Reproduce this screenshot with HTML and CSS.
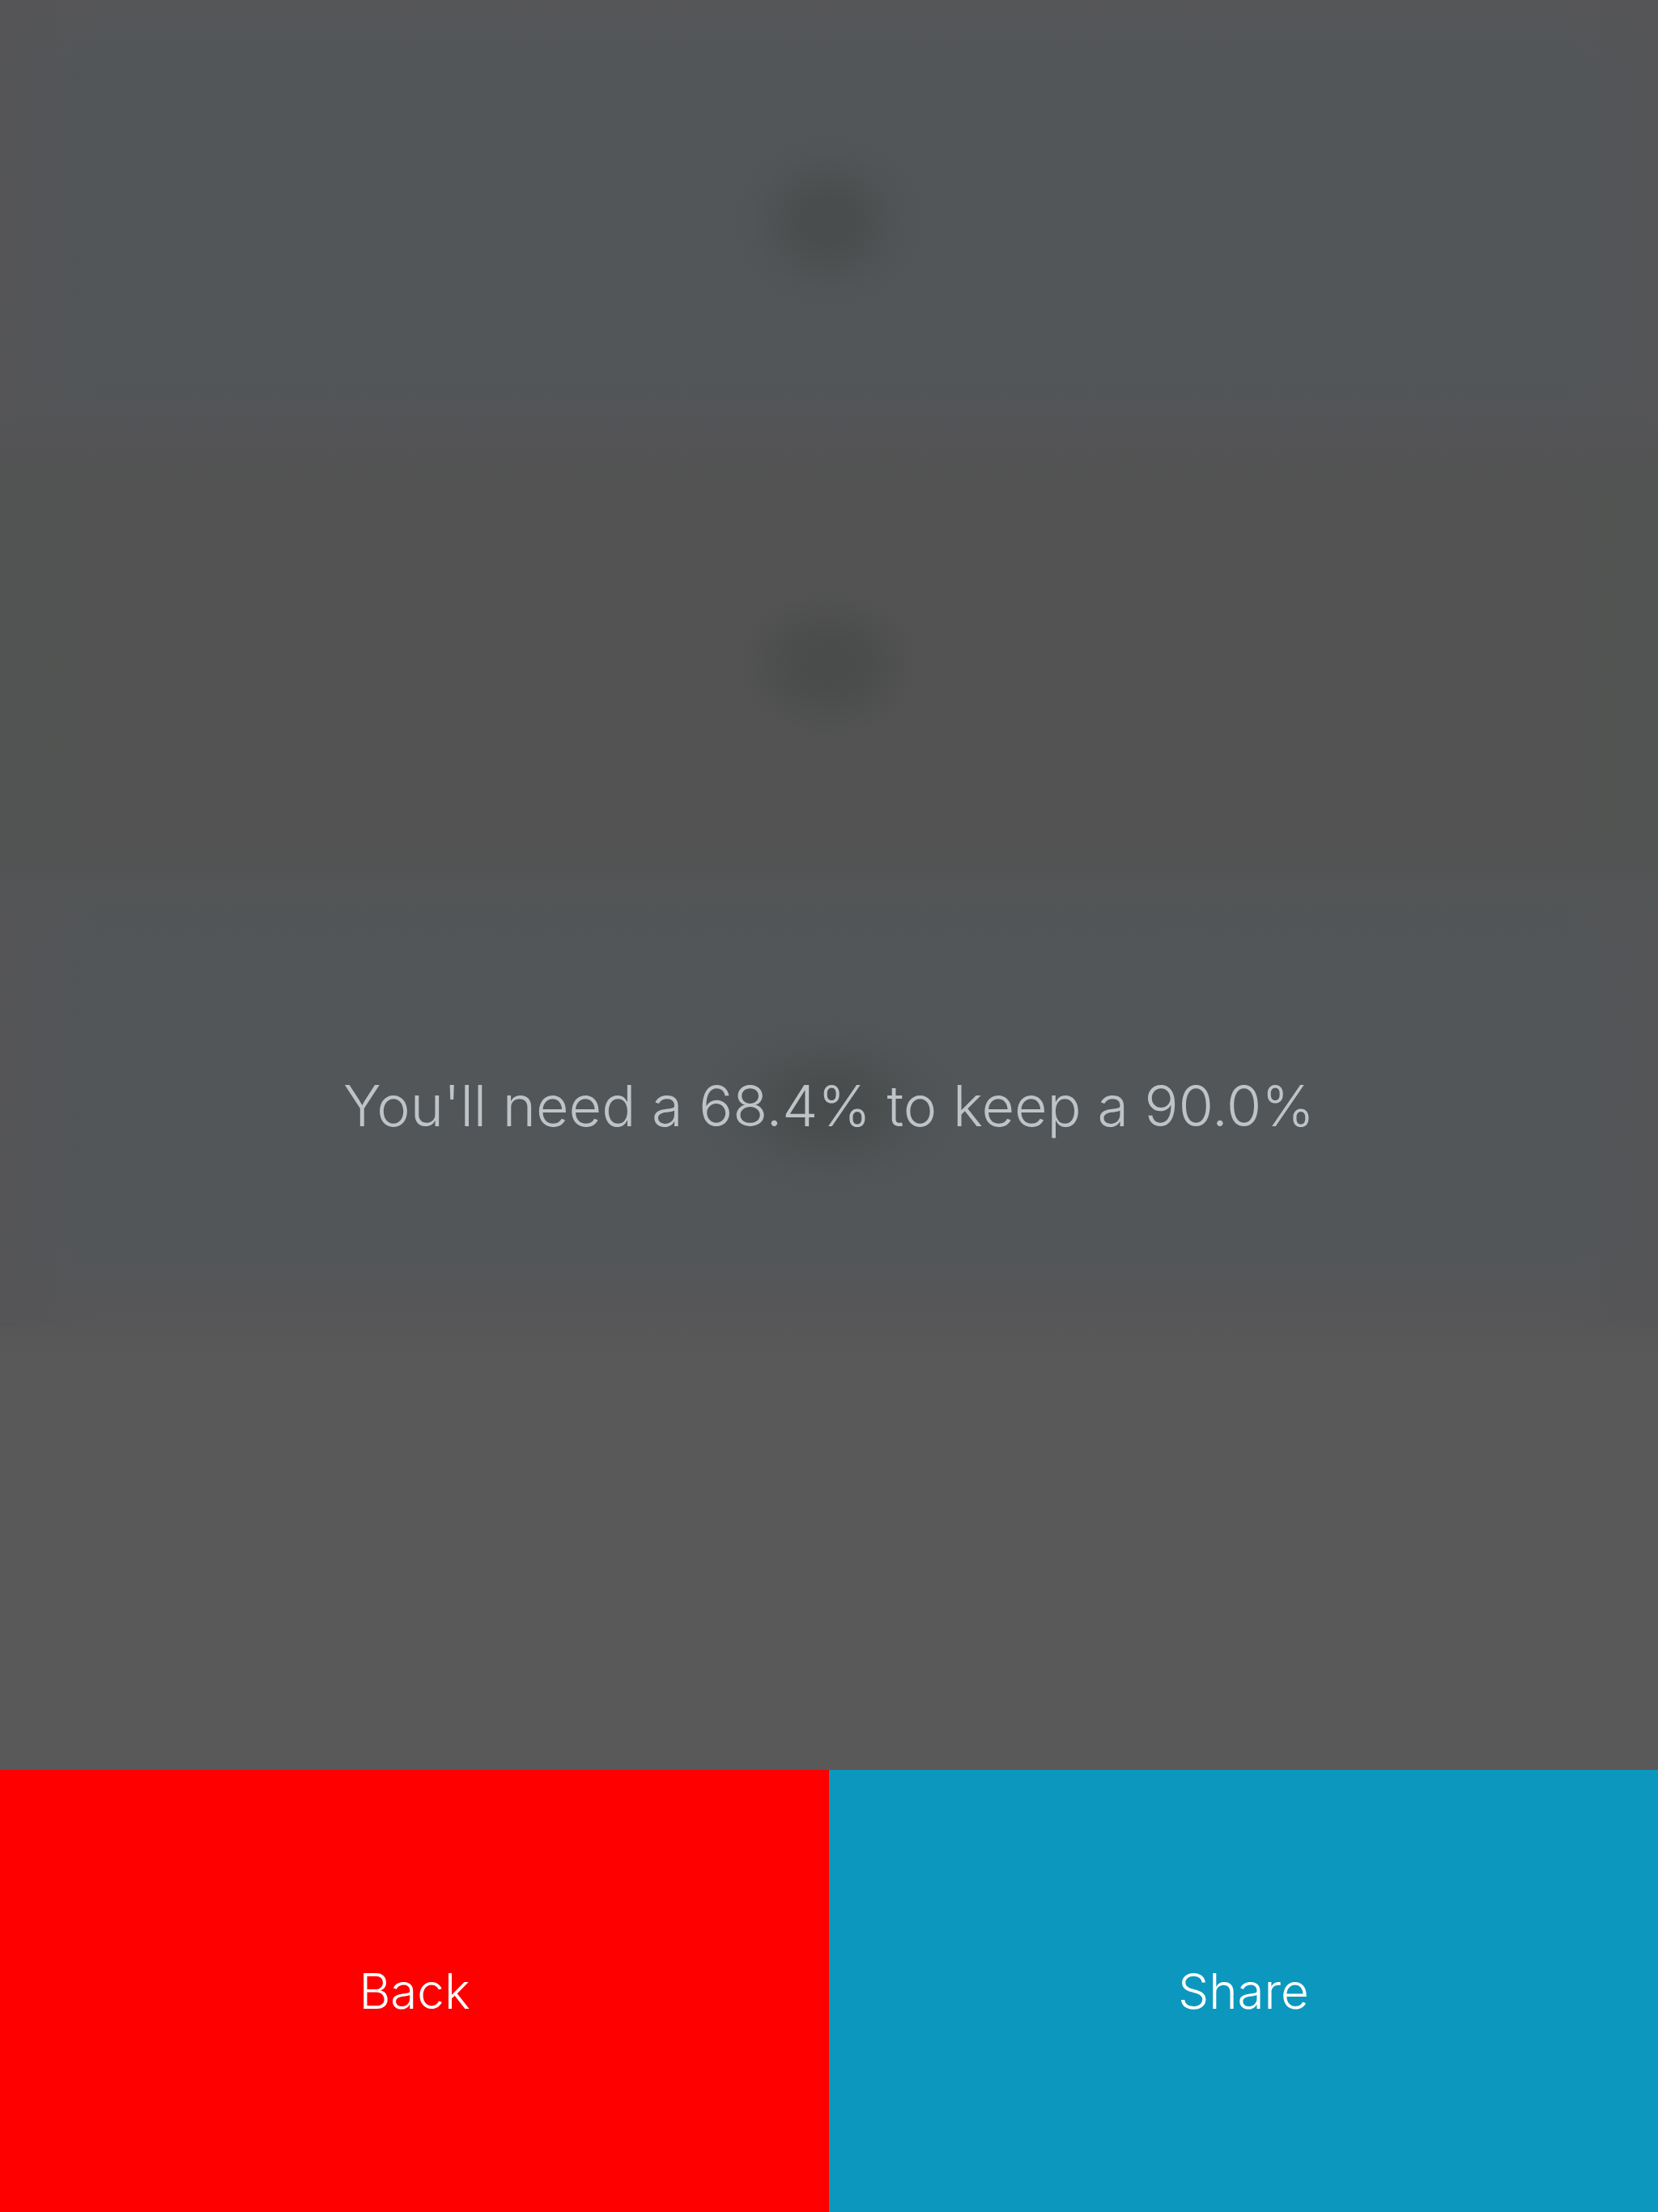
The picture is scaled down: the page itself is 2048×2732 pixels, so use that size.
FILE: index.html
```html
<!DOCTYPE html>
<html lang="en">
<head>
<meta charset="utf-8">
<meta name="viewport" content="width=device-width, initial-scale=1">
<title>Grade needed</title>
<link rel="stylesheet" href="styles.css">
</head>
<body>
<div class="screen">
  <main class="result">
    <p class="message">You'll need a 68.4% to keep a 90.0%</p>
  </main>
  <footer class="actions">
    <button class="action action-back" type="button">Back</button>
    <button class="action action-share" type="button">Share</button>
  </footer>
</div>
</body>
</html>
```
FILE: styles.css
```css
* {
  box-sizing: border-box;
}

body {
  margin: 0;
  font-family: Inter, "Liberation Sans", sans-serif;
  font-weight: 300;
}

.screen {
  display: grid;
  grid-template-rows: 4fr 1fr;
  min-height: 100vh;
  /* Blurred form rows showing through the dimmed overlay */
  background:
    radial-gradient(ellipse 120px 108px at 50% 10vh, #494c4c 0%, #494c4ce0 25%, #4b4e4e90 55%, #4e505130 80%, #52565900 100%),
    radial-gradient(ellipse 136px 108px at 50% 30vh, #494b4a 0%, #494b4ae0 25%, #4b4d4c90 55%, #4e504f30 80%, #52535200 100%),
    radial-gradient(ellipse 168px 112px at 50% 50vh, #494c4c 0%, #494c4ce0 25%, #4b4e4e90 55%, #4e505130 80%, #52565900 100%),
    linear-gradient(90deg, #555557 0%, #55555700 6%, #55555700 94%, #555557 100%) top / 100% 19vh no-repeat,
    linear-gradient(90deg, #515452 0%, #51545200 6%, #51545200 94%, #515452 100%) 0 21vh / 100% 18vh no-repeat,
    linear-gradient(90deg, #555557 0%, #55555700 6%, #55555700 94%, #555557 100%) 0 41vh / 100% 19vh no-repeat,
    linear-gradient(180deg, #565658 0, #525659 3vh, #525659 17vh, #545456 20vh, #525352 22vh, #525352 38vh, #535556 40vh, #525659 43vh, #525659 56vh, #565658 59vh, #595959 62vh);
}

.result {
  display: grid;
  place-items: center;
  /* Centres the message on the whole screen rather than on the area above the buttons */
  padding-top: 20vh;
}

.message {
  margin: 0;
  color: #bdc3c7;
  font-size: 70px;
  line-height: 88px;
  text-align: center;
}

.actions {
  display: grid;
  grid-template-columns: 1fr 1fr;
}

.action {
  border: 0;
  padding: 24px;
  color: #fff;
  font: inherit;
  font-size: 60px;
  line-height: 72px;
  cursor: pointer;
}

.action-back {
  background: #f00;
}

.action-share {
  background: #0c98be;
}
```
